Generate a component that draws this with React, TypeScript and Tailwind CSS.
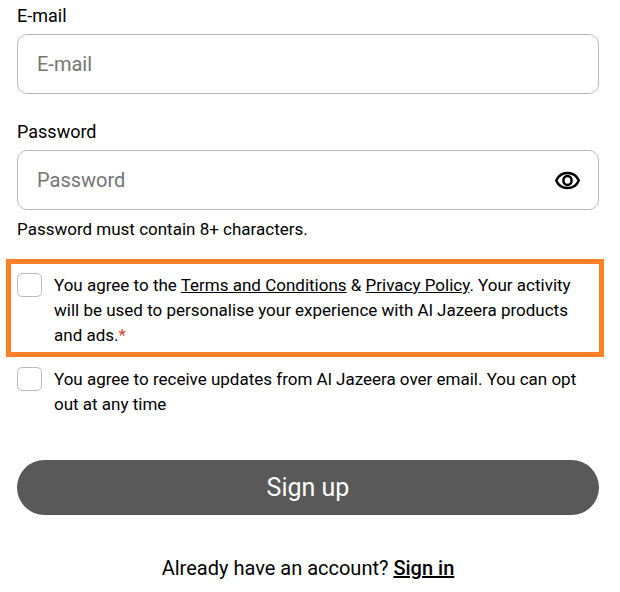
import { useState } from "react"

export default function App() {
  const [showPassword, setShowPassword] = useState(false)

  return (
    <main className="bg-white pt-[3px] pb-3 font-['Roboto',sans-serif] text-[17px] leading-[25px] text-black">
      <form className="flex flex-col" onSubmit={(e) => e.preventDefault()}>
        <div className="flex flex-col pr-[21px] pl-[17px]">
          <label htmlFor="email" className="mb-[6px] text-lg leading-[25px]">
            E-mail
          </label>
          <input
            id="email"
            type="email"
            placeholder="E-mail"
            className="h-[60px] w-full rounded-[10px] border border-[#bbbbbb] px-[19px] text-xl placeholder:text-[#757575]"
          />

          <label htmlFor="password" className="mt-[25px] mb-[6px] text-lg leading-[25px]">
            Password
          </label>
          <div className="flex h-[60px] items-center rounded-[10px] border border-[#bbbbbb] pr-[18px] pl-[19px]">
            <input
              id="password"
              type={showPassword ? "text" : "password"}
              placeholder="Password"
              className="min-w-0 flex-1 text-xl outline-none placeholder:text-[#757575]"
            />
            <button type="button" aria-label="Show password" onClick={() => setShowPassword(!showPassword)}>
              <svg width="26" height="20" viewBox="0 0 26 20" fill="none" stroke="#000000" strokeWidth="2.5">
                <path d="M2.2 10.5C4.4 5.4 8.4 2.9 13.5 2.9S22.6 5.4 24.8 10.5C22.6 15.6 18.6 18.1 13.5 18.1S4.4 15.6 2.2 10.5Z" />
                <ellipse cx="13.5" cy="10.5" rx="4.1" ry="4.5" />
              </svg>
            </button>
          </div>
          <p className="mt-[7px]">Password must contain 8+ characters.</p>
        </div>

        <div className="mt-[17px] mr-4 ml-[6px] flex gap-3 border-[5px] border-[#fb8129] pt-[9px] pr-2 pb-1 pl-[6px]">
          <input
            id="terms"
            type="checkbox"
            className="h-6 w-[25px] shrink-0 appearance-none rounded-[5px] border border-[#bbbbbb] checked:bg-[#595959]"
          />
          <label htmlFor="terms">
            You agree to the{" "}
            <a href="#terms" className="underline">
              Terms and Conditions
            </a>{" "}
            &amp;{" "}
            <a href="#privacy" className="underline">
              Privacy Policy
            </a>
            . Your activity will be used to personalise your experience with Al Jazeera products and ads.
            <span className="text-[#d04a28]">*</span>
          </label>
        </div>

        <div className="mt-[10px] flex gap-3 pr-[21px] pl-[17px]">
          <input
            id="updates"
            type="checkbox"
            className="h-6 w-[25px] shrink-0 appearance-none rounded-[5px] border border-[#bbbbbb] checked:bg-[#595959]"
          />
          <label htmlFor="updates">
            You agree to receive updates from Al Jazeera over email. You can opt out at any time
          </label>
        </div>

        <div className="mt-[43px] pr-[21px] pl-[17px]">
          <button type="submit" className="h-[55px] w-full rounded-full bg-[#595959] text-[25px] text-white">
            Sign up
          </button>
        </div>
      </form>

      <p className="mt-10 pr-1 text-center text-xl leading-[26px]">
        Already have an account?{" "}
        <a href="#signin" className="font-medium underline">
          Sign in
        </a>
      </p>
    </main>
  )
}
